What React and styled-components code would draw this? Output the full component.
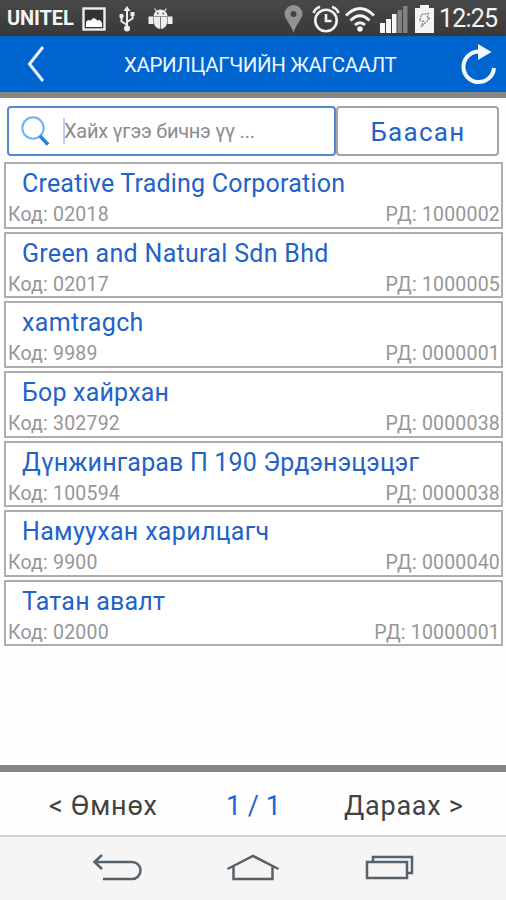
import React from "react";
import styled, { createGlobalStyle } from "styled-components";

const GlobalStyle = createGlobalStyle`
  * { box-sizing: border-box; }
  body { margin: 0; background: #fff; font-family: Roboto, "Noto Sans", sans-serif; }
`;

const Screen = styled.div`
  width: 506px;
  height: 900px;
  display: flex;
  flex-direction: column;
  background: #fefefe;
  overflow: hidden;
`;

const StatusBar = styled.div`
  height: 36px;
  flex: none;
  display: flex;
  align-items: center;
  justify-content: space-between;
  padding: 1px 8px 0 7px;
  background: linear-gradient(#484848, #393939);
  color: #f4f4f4;
`;

const StatusGroup = styled.div`
  display: flex;
  align-items: center;
  height: 36px;
`;

const Carrier = styled.span`
  width: 74px;
  font-size: 20px;
  line-height: 34px;
  padding-bottom: 2px;
  font-weight: 700;
  letter-spacing: ${(p) => p.$track}px;
  white-space: nowrap;
`;

const Clock = styled.span`
  width: 59px;
  margin-left: 5px;
  font-size: 25px;
  line-height: 38px;
  letter-spacing: -0.8px;
  white-space: nowrap;
`;

const Icon = styled.svg`
  display: block;
  flex: none;
  margin-left: ${(p) => p.$gap || 0}px;
`;

const Header = styled.header`
  height: 62px;
  flex: none;
  display: grid;
  grid-template-columns: 124px 1fr 48px;
  align-items: center;
  background: #0064cf;
  border-bottom: 6px solid #898585;
  color: #eef5ff;
`;

const Heading = styled.h1`
  margin: 0;
  padding-top: 2px;
  font-size: 20.5px;
  line-height: 54px;
  font-weight: 400;
  letter-spacing: -0.4px;
  white-space: nowrap;
`;

const SearchRow = styled.div`
  display: flex;
  flex: none;
  height: 50px;
  margin: 8px 7px 0 7px;
`;

const SearchBox = styled.div`
  width: 329px;
  display: flex;
  align-items: center;
  border: 2px solid #5686d2;
  border-radius: 4px;
  background: #fff;
`;

const Caret = styled.span`
  width: 2px;
  height: 26px;
  margin-left: 13px;
  margin-right: -1px;
  background: #c3cdf0;
`;

const Placeholder = styled.span`
  font-size: 20px;
  line-height: 46px;
  color: #8b8b8b;
  white-space: nowrap;
  letter-spacing: -0.25px;
`;

const DayButton = styled.button`
  flex: 1;
  padding: 3px 0 0 1px;
  border: 2px solid #a3a3a3;
  border-radius: 4px;
  background: #fff;
  color: #2263c7;
  font: 400 26px/43px Roboto, sans-serif;
  letter-spacing: 1.3px;
`;

const List = styled.div`
  flex: 1;
  display: flex;
  flex-direction: column;
  gap: 3px;
  padding: 6px 3px 0 4px;
`;

const Row = styled.div`
  height: 66.65px;
  flex: none;
  padding: 2px 1px 0 2px;
  border: 2px solid #adadad;
  background: #fff;
`;

const Name = styled.div`
  height: 36px;
  padding-left: 14px;
  font-size: 25px;
  line-height: 36px;
  letter-spacing: ${(p) => p.$track || 0}px;
  color: #2262c9;
  white-space: nowrap;
`;

const Details = styled.div`
  display: flex;
  justify-content: space-between;
  font-size: 19.5px;
  line-height: 25px;
  letter-spacing: 0.2px;
  color: #969696;
`;

const Footer = styled.footer`
  height: 70px;
  flex: none;
  display: grid;
  grid-template-columns: 177px 118px 1fr;
  align-items: center;
  border-top: 7px solid #858585;
  background: #fefefe;
`;

const PageLink = styled.span`
  padding: 6px 0 0 49px;
  font-size: 27px;
  line-height: 57px;
  letter-spacing: ${(p) => p.$track || 0}px;
  color: ${(p) => (p.$current ? "#2465d2" : "#424242")};
  white-space: nowrap;
`;

const NavBar = styled.nav`
  height: 65px;
  flex: none;
  display: flex;
  align-items: center;
  padding: 0 0 3px 92px;
  border-top: 2px solid #d4d4d4;
  background: #f5f5f5;
`;

const customers = [
  { name: "Creative Trading Corporation", code: "02018", reg: "1000002", track: 0.2 },
  { name: "Green and Natural Sdn Bhd", code: "02017", reg: "1000005", track: 0.3 },
  { name: "xamtragch", code: "9989", reg: "0000001", track: 0.35 },
  { name: "Бор хайрхан", code: "302792", reg: "0000038", track: 0.2 },
  { name: "Дүнжингарав П 190 Эрдэнэцэцэг", code: "100594", reg: "0000038", track: 0.16 },
  { name: "Намуухан харилцагч", code: "9900", reg: "0000040", track: 0.32 },
  { name: "Татан авалт", code: "02000", reg: "10000001", track: 0.2 },
];

function Status() {
  return (
    <StatusBar>
      <StatusGroup>
        <Carrier $track={-0.1}>UNITEL</Carrier>
        <Icon width="24" height="24" viewBox="0 0 24 24" $gap={1}>
          <rect x="1.5" y="1.5" width="21" height="21" fill="#333" stroke="#eee" strokeWidth="2.4" />
          <path d="M4 20v-5l2-2 3 .5 2-2.500 3 1 1 1.500 3-.5 2 3v4z" fill="#fff" />
        </Icon>
        <Icon width="16" height="26" viewBox="0 0 16 26" $gap={13} fill="none" stroke="#eee" strokeWidth="2">
          <path d="M8 3v19M8 19l-5.5-3.5V11M8 16l5.500-3.500V8" />
          <path d="M8 0l3.500 5h-7z" fill="#eee" stroke="none" />
          <circle cx="8" cy="22.500" r="3" fill="#eee" stroke="none" />
          <circle cx="2.500" cy="10" r="2.200" fill="#eee" stroke="none" />
          <path d="M11.500 6h4v4h-4z" fill="#eee" stroke="none" />
        </Icon>
        <Icon width="25" height="24" viewBox="0 0 25 24" $gap={13} fill="#eee">
          <path d="M5.500 9.500a7 7 0 0 1 14 0z" />
          <path d="M8.500 4L6.500 1.500M16.500 4l2-2.500" stroke="#eee" strokeWidth="1.200" />
          <path d="M6 10h13v5.500a6.500 6.500 0 0 1-13 0zM.5 9.500h5v7.500h-5zM19.500 9.500h5v7.500h-5z" />
          <path d="M12.500 10v12" stroke="#777" strokeWidth="1" />
          <circle cx="9.800" cy="6.500" r=".9" fill="#555" />
          <circle cx="15.200" cy="6.500" r=".9" fill="#555" />
        </Icon>
      </StatusGroup>
      <StatusGroup>
        <Icon width="19" height="28" viewBox="0 0 19 28">
          <path fillRule="evenodd" d="M9.500 0A9 9 0 0 0 .5 9c0 5 6.500 10 9 19 2.500-9 9-14 9-19a9 9 0 0 0-9-9zm0 6a3 3 0 1 1 0 6 3 3 0 0 1 0-6z" fill="#929292" />
        </Icon>
        <Icon width="28" height="28" viewBox="0 0 28 28" $gap={9} fill="none" stroke="#f2f2f2" strokeWidth="2.600">
          <circle cx="14" cy="15.500" r="10.700" />
          <path d="M14 9v7h5.500M1.500 8Q3 3.500 8 1.800M26.500 8Q25 3.500 20 1.800" />
        </Icon>
        <Icon width="30" height="26" viewBox="0 0 30 26" $gap={5} fill="none" stroke="#f4f4f4" strokeWidth="3">
          <path d="M1 9.500Q15-4.500 29 9.500M5.500 14.500Q15 5 24.500 14.500M10 19q5-4.500 10 0" />
          <circle cx="15" cy="23" r="2.700" fill="#fff" stroke="none" />
        </Icon>
        <Icon width="28" height="28" viewBox="0 0 28 28" $gap={5}>
          <path d="M0 18h5v10H0zM6 14h5v14H6zM12 9h4.500v19H12z" fill="#f6f6f6" />
          <path d="M17.500 5H22v23h-4.500zM23 1h4.500v27H23z" fill="#818181" />
        </Icon>
        <Icon width="19" height="28" viewBox="0 0 19 28" $gap={7}>
          <path d="M5 0h9v3h5v25H0V3h5z" fill="#f4f4f4" />
          <path d="M6.500 9.500l7-1-1.500 4.500h3L6 22l2.500-6H4.500z" fill="#f4f4f4" stroke="#777" strokeWidth="1.200" strokeDasharray="2 1" />
        </Icon>
        <Clock>12:25</Clock>
      </StatusGroup>
    </StatusBar>
  );
}

export default function App() {
  return (
    <Screen>
      <GlobalStyle />
      <Status />
      <Header>
        <Icon width="18" height="38" viewBox="0 0 18 38" $gap={27}>
          <path d="M16 2L2.500 19 16 36" fill="none" stroke="#e9f4ff" strokeWidth="3" />
        </Icon>
        <Heading>ХАРИЛЦАГЧИЙН ЖАГСААЛТ</Heading>
        <Icon width="38" height="42" viewBox="0 0 38 42" $gap={1}>
          <path d="M20 8.500A15.300 15.300 0 1 0 35 25" fill="none" stroke="#f2f8ff" strokeWidth="4" />
          <path d="M19 1l13.500 8L19 17z" fill="#f2f8ff" />
        </Icon>
      </Header>
      <SearchRow>
        <SearchBox>
          <Icon width="29" height="30" viewBox="0 0 29 30" $gap={12} fill="none">
            <circle cx="12" cy="12" r="10.700" stroke="#72aff6" strokeWidth="2" />
            <path d="M19 20l8 8.500" stroke="#267fe4" strokeWidth="3.500" />
          </Icon>
          <Caret />
          <Placeholder>Хайх үгээ бичнэ үү ...</Placeholder>
        </SearchBox>
        <DayButton>Баасан</DayButton>
      </SearchRow>
      <List>
        {customers.map((c) => (
          <Row key={c.code}>
            <Name $track={c.track}>{c.name}</Name>
            <Details>
              <span>Код: {c.code}</span>
              <span>РД: {c.reg}</span>
            </Details>
          </Row>
        ))}
      </List>
      <Footer>
        <PageLink $track={0.8}>&lt; Өмнөх</PageLink>
        <PageLink $current>1 / 1</PageLink>
        <PageLink $track={0.75}>Дараах &gt;</PageLink>
      </Footer>
      <NavBar>
        <Icon width="50" height="28" viewBox="0 0 50 28" fill="none" stroke="#56616a" strokeWidth="2.500">
          <path d="M2 9h38a8.500 8.500 0 0 1 0 17H11M10 2L2.500 9l7.500 7" />
        </Icon>
        <Icon width="54" height="28" viewBox="0 0 54 28" $gap={84} fill="none" stroke="#56616a" strokeWidth="2.500">
          <path d="M1.500 16L27 3l25.500 13M7.500 14v12h39V14" />
        </Icon>
        <Icon width="49" height="26" viewBox="0 0 49 26" $gap={85} fill="none" stroke="#56616a" strokeWidth="2.500">
          <path d="M2 8h40v16H2zM8 8V3h39v16h-5" />
        </Icon>
      </NavBar>
    </Screen>
  );
}
